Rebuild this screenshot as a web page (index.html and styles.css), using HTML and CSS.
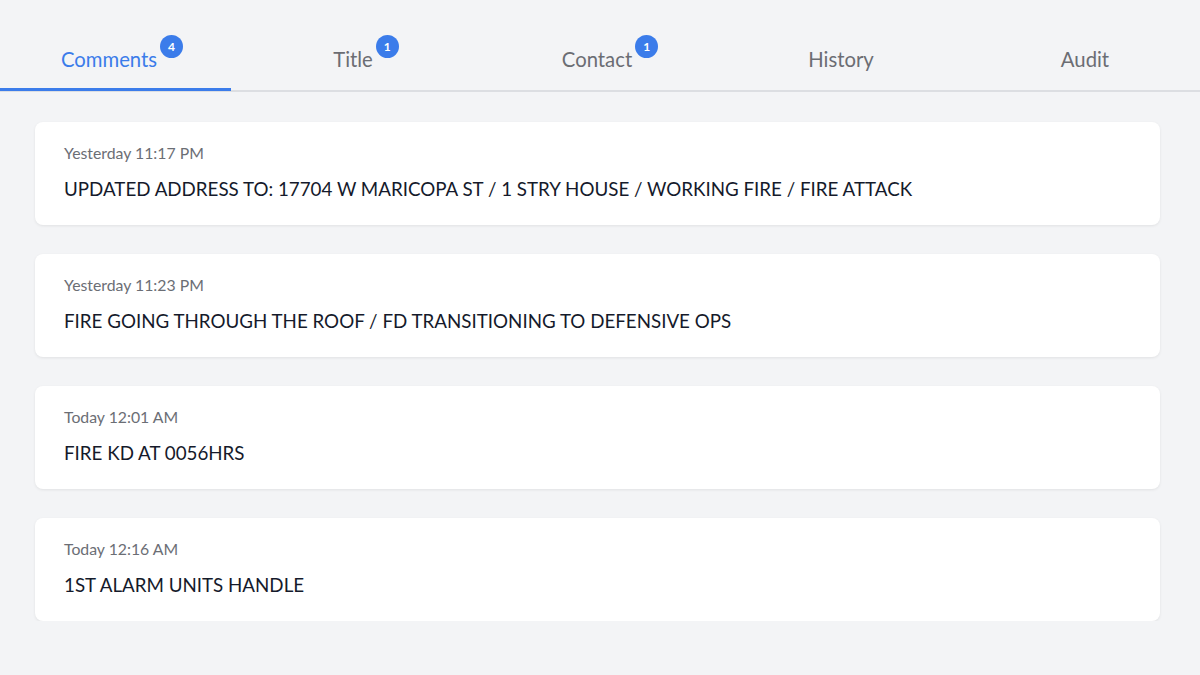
FILE: index.html
```html
<!DOCTYPE html>
<html lang="en">
<head>
    <meta charset="UTF-8">
    <meta name="viewport" content="width=device-width, initial-scale=1.0">
    <title>Incident Comments</title>
    <link rel="stylesheet" href="styles.css">
</head>
<body>
    <nav class="tabs">
        <div class="tab active"><span class="tab-label">Comments<span class="badge">4</span></span></div>
        <div class="tab"><span class="tab-label">Title<span class="badge">1</span></span></div>
        <div class="tab"><span class="tab-label">Contact<span class="badge">1</span></span></div>
        <div class="tab"><span class="tab-label">History</span></div>
        <div class="tab"><span class="tab-label">Audit</span></div>
    </nav>

    <main class="comments">
        <div class="comment-card">
            <div class="comment-time">Yesterday 11:17 PM</div>
            <div class="comment-text">UPDATED ADDRESS TO: 17704 W MARICOPA ST / 1 STRY HOUSE / WORKING FIRE / FIRE ATTACK</div>
        </div>
        <div class="comment-card">
            <div class="comment-time">Yesterday 11:23 PM</div>
            <div class="comment-text">FIRE GOING THROUGH THE ROOF / FD TRANSITIONING TO DEFENSIVE OPS</div>
        </div>
        <div class="comment-card">
            <div class="comment-time">Today 12:01 AM</div>
            <div class="comment-text">FIRE KD AT 0056HRS</div>
        </div>
        <div class="comment-card">
            <div class="comment-time">Today 12:16 AM</div>
            <div class="comment-text">1ST ALARM UNITS HANDLE</div>
        </div>
    </main>
</body>
</html>
```

FILE: styles.css
```css
:root {
    --bg-color: #f3f4f6;
    --card-color: #ffffff;
    --accent-color: #3b7cea;
    --tab-text: #6b6d73;
    --time-text: #6b6e75;
    --body-text: #151a2b;
    --line-color: #dcdee2;
}

body {
    background: var(--bg-color);
    font-family: 'Lato', 'Liberation Sans', sans-serif;
    margin: 0;
    padding: 0;
    overflow: hidden;
}

.tabs {
    display: grid;
    grid-template-columns: repeat(5, 231px);
    column-gap: 13px;
    height: 90px;
    border-bottom: 2px solid var(--line-color);
}

.tab {
    display: flex;
    justify-content: center;
    align-items: flex-end;
    padding-right: 13px;
    padding-bottom: 17px;
    border-bottom: 3px solid transparent;
    margin-bottom: -1px;
    font-size: 20.3px;
    color: var(--tab-text);
}

.tab.active {
    color: var(--accent-color);
    border-bottom-color: var(--accent-color);
}

.tab-label {
    position: relative;
}

.badge {
    position: absolute;
    left: 100%;
    top: -12px;
    margin-left: 3px;
    width: 23px;
    height: 23px;
    border-radius: 50%;
    background: var(--accent-color);
    color: #ffffff;
    font-size: 12px;
    font-weight: 700;
    line-height: 23px;
    text-align: center;
}

.comments {
    display: flex;
    flex-direction: column;
    gap: 29px;
    padding: 30px 40px 0 35px;
}

.comment-card {
    background: var(--card-color);
    border-radius: 8px;
    box-shadow: 0 1px 3px rgba(0, 0, 0, 0.08);
    height: 103px;
    box-sizing: border-box;
    padding: 21px 29px 0;
}

.comment-time {
    font-size: 15.8px;
    color: var(--time-text);
    margin-bottom: 15px;
}

.comment-text {
    font-size: 18.75px;
    color: var(--body-text);
}
```
